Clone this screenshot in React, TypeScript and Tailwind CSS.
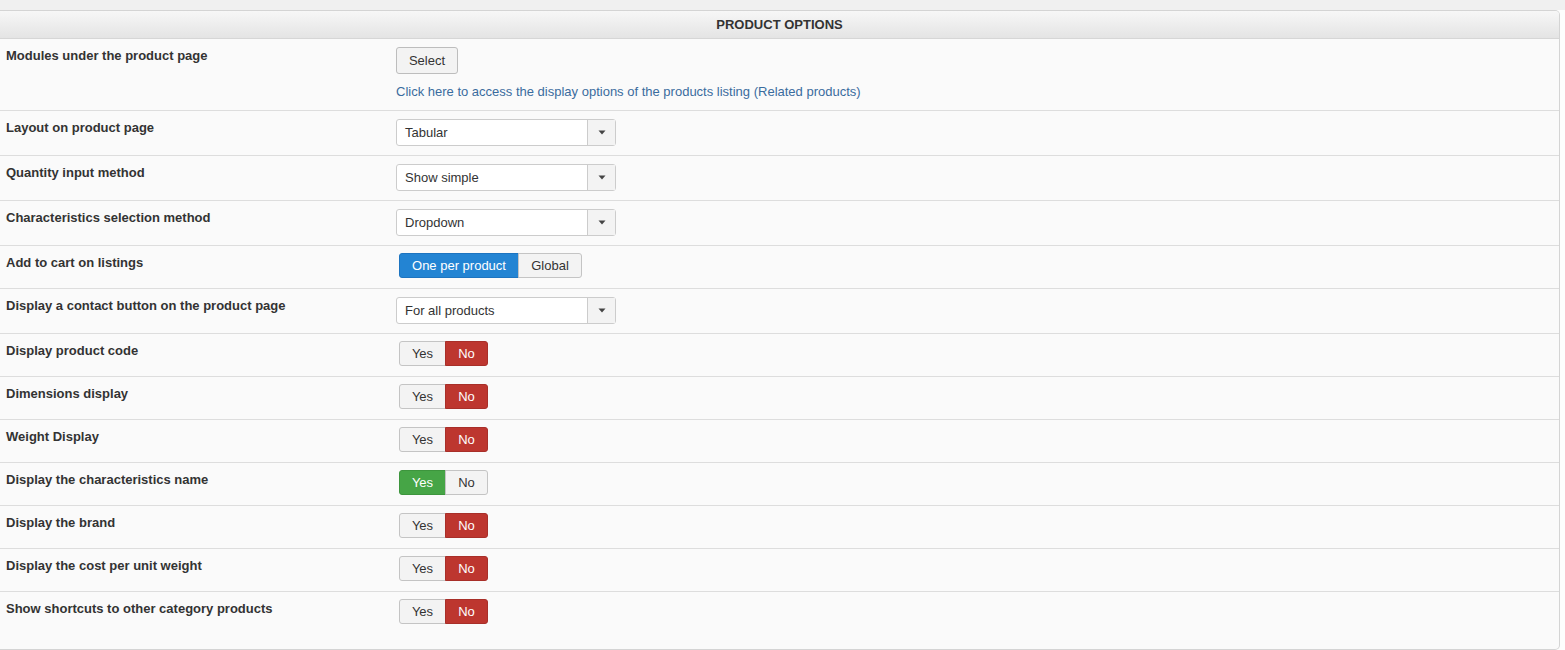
import React from "react"

type Row =
  | { label: string; kind: "modules" }
  | { label: string; kind: "select"; value: string }
  | { label: string; kind: "cart" }
  | { label: string; kind: "yesno"; yes: boolean }

const rows: Row[] = [
  { label: "Modules under the product page", kind: "modules" },
  { label: "Layout on product page", kind: "select", value: "Tabular" },
  { label: "Quantity input method", kind: "select", value: "Show simple" },
  { label: "Characteristics selection method", kind: "select", value: "Dropdown" },
  { label: "Add to cart on listings", kind: "cart" },
  { label: "Display a contact button on the product page", kind: "select", value: "For all products" },
  { label: "Display product code", kind: "yesno", yes: false },
  { label: "Dimensions display", kind: "yesno", yes: false },
  { label: "Weight Display", kind: "yesno", yes: false },
  { label: "Display the characteristics name", kind: "yesno", yes: true },
  { label: "Display the brand", kind: "yesno", yes: false },
  { label: "Display the cost per unit weight", kind: "yesno", yes: false },
  { label: "Show shortcuts to other category products", kind: "yesno", yes: false },
]

function Dropdown({ value }: { value: string }) {
  return (
    <div className="flex h-[27px] w-[220px] rounded-[3px] border border-[#cccccc] bg-white">
      <span className="flex-1 pl-2 text-[13px] leading-[25px] text-[#333]">{value}</span>
      <span className="flex w-[28px] items-center justify-center border-l border-[#cccccc] bg-[#f3f3f3]">
        <svg width="8" height="5" viewBox="0 0 8 5">
          <path d="M0.5 0.5h7L4 4.5z" fill="#444" />
        </svg>
      </span>
    </div>
  )
}

// radio button pair; the active side gets the green / red fill
function YesNo({ yes }: { yes: boolean }) {
  return (
    <div className="-mt-px mb-px ml-[3px] flex h-[25px] text-[13px] leading-[23px]">
      <span
        className={`w-[47px] rounded-l-[3px] border text-center ${
          yes ? "border-[#3d953d] bg-[#46a546] text-white" : "border-[#c4c4c4] bg-[#f3f3f3] text-[#333]"
        }`}
      >
        Yes
      </span>
      <span
        className={`-ml-px w-[43px] rounded-r-[3px] border text-center ${
          yes ? "border-[#c4c4c4] bg-[#f3f3f3] text-[#333]" : "border-[#a82f29] bg-[#bd362f] text-white"
        }`}
      >
        No
      </span>
    </div>
  )
}

function Control({ row }: { row: Row }) {
  if (row.kind === "modules") {
    return (
      <div>
        <button className="h-[27px] w-[62px] rounded-[3px] border border-[#bdbdbd] bg-[#f3f3f3] text-[13px] text-[#333]">
          Select
        </button>
        <div className="mt-[9px] text-[13px] leading-[18px] text-[#3a6c9e]">
          Click here to access the display options of the products listing (Related products)
        </div>
      </div>
    )
  }
  if (row.kind === "select") return <Dropdown value={row.value} />
  if (row.kind === "cart") {
    return (
      <div className="-mt-px mb-px ml-[3px] flex h-[25px] text-[13px] leading-[23px]">
        <span className="w-[120px] rounded-l-[3px] border border-[#1d74c0] bg-[#2384d3] text-center text-white">
          One per product
        </span>
        <span className="-ml-px w-[64px] rounded-r-[3px] border border-[#c4c4c4] bg-[#f3f3f3] text-center text-[#333]">
          Global
        </span>
      </div>
    )
  }
  return <YesNo yes={row.yes} />
}

export default function App() {
  return (
    <div className="min-h-[650px] bg-[#fdfdfd] font-['Liberation_Sans',Arial,sans-serif] text-[#333]">
      <div className="h-[10px] bg-[#f0f0f0]" />
      <div className="mr-[5px] h-[640px] overflow-hidden rounded-r-[5px] border-r border-t border-b border-[#d4d4d4] bg-[#fafafa]">
        <div className="h-[28px] border-b border-[#d6d6d6] bg-gradient-to-b from-[#f7f7f7] to-[#e4e4e4] text-center text-[13px] font-bold leading-[27px] text-[#333]">
          PRODUCT OPTIONS
        </div>
        {rows.map((row, i) => (
          <div
            key={row.label}
            className={`flex pb-[9px] pt-2 ${i < rows.length - 1 ? "border-b border-[#dddddd]" : ""}`}
          >
            <div className="w-[396px] shrink-0 pl-[6px] text-[13px] font-bold leading-[18px] text-[#333]">
              {row.label}
            </div>
            <Control row={row} />
          </div>
        ))}
      </div>
    </div>
  )
}
